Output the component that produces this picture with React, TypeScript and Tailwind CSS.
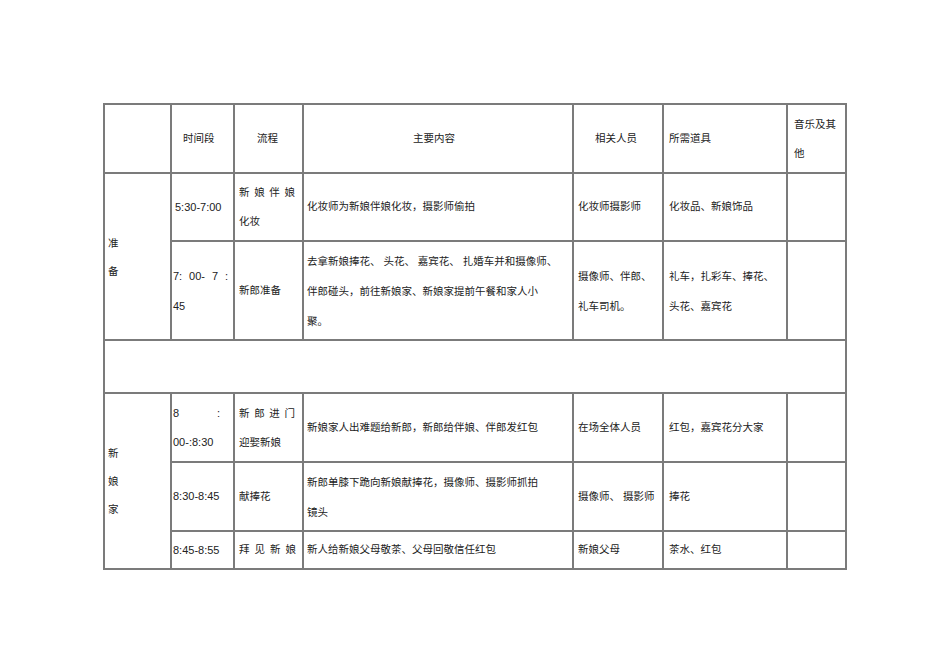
const cell = "bg-white flex items-center";

const Spread = ({ parts, w }: { parts: string[]; w: string }) => (
    <span className={`flex justify-between ${w}`}>
        {parts.map((p, i) => (
            <span key={i}>{p}</span>
        ))}
    </span>
);

export default function App() {
    return (
        <div
            className="min-h-[672px] w-[950px] bg-white pl-[103px] pt-[103px] text-[10.5px] text-[#222]"
            style={{ fontFamily: '"Liberation Sans", "Noto Sans CJK SC", sans-serif' }}
        >
            <div className="grid w-[744px] grid-cols-[65px_61px_67px_268px_88px_122px_57px] grid-rows-[67px_66px_97px_51px_67px_67px_36px] gap-[2px] bg-[#7b7b7b] p-[2px]">
                {/* header */}
                <div className={cell} />
                <div className={`${cell} pl-[11px]`}>时间段</div>
                <div className={`${cell} pl-[22px]`}>流程</div>
                <div className={`${cell} pl-[109px]`}>主要内容</div>
                <div className={`${cell} pl-[21px]`}>相关人员</div>
                <div className={`${cell} pl-[5px]`}>所需道具</div>
                <div className={`${cell} pl-[6px] leading-[29px]`}>
                    <div>
                        音乐及其
                        <br />他
                    </div>
                </div>

                {/* 准备 */}
                <div className={`${cell} row-span-2 pl-[3px] leading-[28px]`}>
                    <div>
                        准
                        <br />备
                    </div>
                </div>
                <div className={`${cell} pl-[3px] text-[11px]`}>5:30-7:00</div>
                <div className={`${cell} pl-[4px] leading-[29px]`}>
                    <div>
                        <Spread parts={["新", "娘", "伴", "娘"]} w="w-[56px]" />
                        <div>化妆</div>
                    </div>
                </div>
                <div className={`${cell} pl-[3px]`}>化妆师为新娘伴娘化妆，摄影师偷拍</div>
                <div className={`${cell} pl-[4px]`}>化妆师摄影师</div>
                <div className={`${cell} pl-[5px]`}>化妆品、新娘饰品</div>
                <div className={cell} />

                <div className={`${cell} pl-[1px] text-[11px] leading-[30px]`}>
                    <div>
                        <Spread parts={["7:", "00-", "7", ":"]} w="w-[55px]" />
                        <div>45</div>
                    </div>
                </div>
                <div className={`${cell} pl-[4px]`}>新郎准备</div>
                <div className={`${cell} whitespace-nowrap pl-[3px] leading-[30px]`}>
                    <div>
                        <div>去拿新娘捧花、 头花、 嘉宾花、 扎婚车并和摄像师、</div>
                        <div>伴郎碰头，前往新娘家、新娘家提前午餐和家人小</div>
                        <div>聚。</div>
                    </div>
                </div>
                <div className={`${cell} pl-[4px] leading-[30px]`}>
                    <div>
                        <div>摄像师、伴郎、</div>
                        <div>礼车司机。</div>
                    </div>
                </div>
                <div className={`${cell} pl-[5px] leading-[30px]`}>
                    <div>
                        <div>礼车，扎彩车、捧花、</div>
                        <div>头花、嘉宾花</div>
                    </div>
                </div>
                <div className={cell} />

                {/* blank row */}
                <div className={`${cell} col-span-7`} />

                {/* 新娘家 */}
                <div className={`${cell} row-span-3 pl-[3px] leading-[28px]`}>
                    <div>
                        新
                        <br />娘
                        <br />家
                    </div>
                </div>
                <div className={`${cell} pl-[1px] text-[11px] leading-[29px]`}>
                    <div>
                        <Spread parts={["8", ":"]} w="w-[47px]" />
                        <div>00-:8:30</div>
                    </div>
                </div>
                <div className={`${cell} pl-[4px] leading-[29px]`}>
                    <div>
                        <Spread parts={["新", "郎", "进", "门"]} w="w-[56px]" />
                        <div>迎娶新娘</div>
                    </div>
                </div>
                <div className={`${cell} pl-[3px]`}>新娘家人出难题给新郎，新郎给伴娘、伴郎发红包</div>
                <div className={`${cell} pl-[4px]`}>在场全体人员</div>
                <div className={`${cell} pl-[5px]`}>红包，嘉宾花分大家</div>
                <div className={cell} />

                <div className={`${cell} pl-[1px] text-[11px]`}>8:30-8:45</div>
                <div className={`${cell} pl-[4px]`}>献捧花</div>
                <div className={`${cell} whitespace-nowrap pl-[3px] leading-[30px]`}>
                    <div>
                        <div>新郎单膝下跪向新娘献捧花，摄像师、摄影师抓拍</div>
                        <div>镜头</div>
                    </div>
                </div>
                <div className={`${cell} whitespace-pre pl-[4px]`}>摄像师、 摄影师</div>
                <div className={`${cell} pl-[5px]`}>捧花</div>
                <div className={cell} />

                <div className={`${cell} pl-[1px] text-[11px]`}>8:45-8:55</div>
                <div className={`${cell} pl-[4px]`}>
                    <Spread parts={["拜", "见", "新", "娘"]} w="w-[57px]" />
                </div>
                <div className={`${cell} pl-[3px]`}>新人给新娘父母敬茶、父母回敬信任红包</div>
                <div className={`${cell} pl-[4px]`}>新娘父母</div>
                <div className={`${cell} pl-[5px]`}>茶水、红包</div>
                <div className={cell} />
            </div>
        </div>
    );
}
